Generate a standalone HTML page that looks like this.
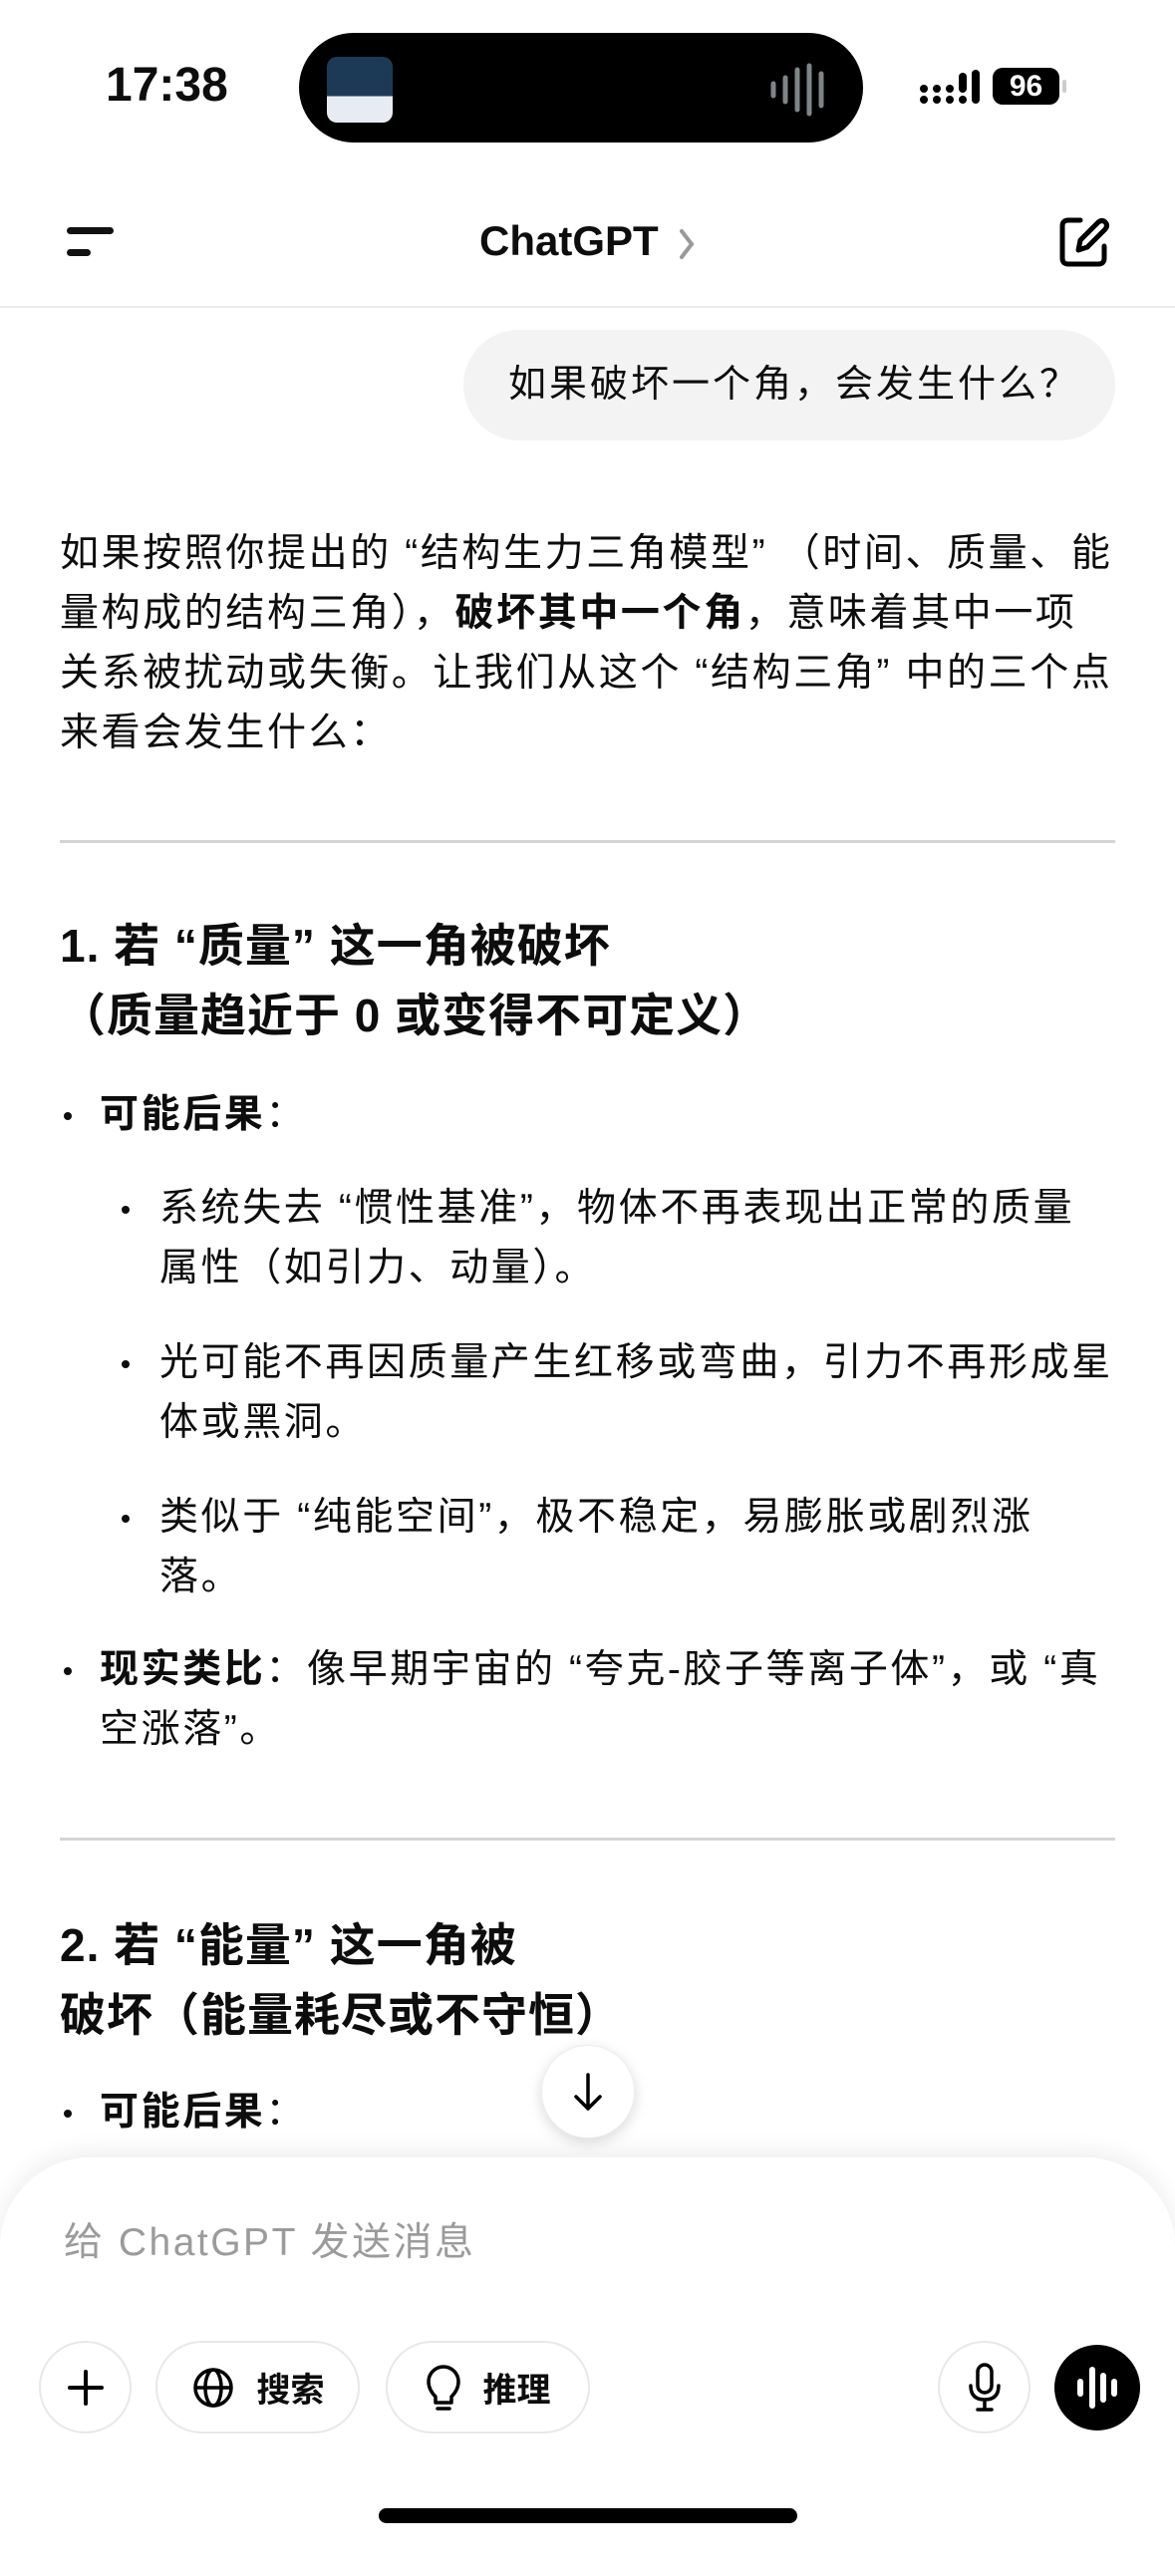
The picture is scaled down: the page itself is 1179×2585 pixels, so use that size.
<!DOCTYPE html>
<html><head><meta charset="utf-8"><style>
*{margin:0;padding:0;box-sizing:border-box}
body{width:1179px;height:2556px;background:#fff;position:relative;overflow:hidden;font-family:"Liberation Sans","Noto Sans CJK SC",sans-serif;color:#0d0d0d}
.a{position:absolute;white-space:nowrap}
.p{font-size:39px;line-height:60px;letter-spacing:2.6px}
.h{font-size:46px;font-weight:700;line-height:70px;letter-spacing:1px}
b{font-weight:700}
.dot{position:absolute;width:8px;height:8px;border-radius:50%;background:#0d0d0d}
.hr{position:absolute;left:60px;width:1059px;height:3px;background:#d4d4d4}
.btn{position:absolute;top:2349px;height:93px;border:2px solid #e8e8e8;border-radius:47px;background:#fff;display:flex;align-items:center;justify-content:center;font-size:34px;font-weight:700}
</style></head><body>
<!-- status bar -->
<div class="a" style="left:106px;top:58px;font-size:48px;font-weight:600;line-height:56px">17:38</div>
<div class="a" style="left:300px;top:33px;width:566px;height:110px;background:#000;border-radius:55px"></div>
<div class="a" style="left:328px;top:57px;width:66px;height:66px;border-radius:10px;background:linear-gradient(#1c3a55 0 60%,#e8ecf2 60%)"></div>
<svg class="a" style="left:770px;top:62px" width="70" height="56"><g stroke="#7d8587" stroke-width="5" stroke-linecap="round"><line x1="6" y1="22" x2="6" y2="34"/><line x1="18" y1="16" x2="18" y2="40"/><line x1="30" y1="8" x2="30" y2="48"/><line x1="42" y1="4" x2="42" y2="52"/><line x1="54" y1="12" x2="54" y2="44"/></g></svg>
<svg class="a" style="left:923px;top:70px" width="62" height="36"><g fill="#000"><circle cx="4" cy="30" r="4"/><circle cx="17" cy="30" r="4"/><circle cx="30" cy="30" r="4"/><circle cx="43" cy="30" r="4"/><circle cx="4" cy="19" r="4"/><circle cx="17" cy="19" r="4"/><circle cx="30" cy="19" r="4"/><rect x="39" y="3" width="8" height="20" rx="4"/><rect x="52" y="0" width="8" height="34" rx="4"/></g></svg>
<div class="a" style="left:996px;top:68px;width:67px;height:37px;background:#000;border-radius:10px;color:#fff;font-size:30px;font-weight:700;text-align:center;line-height:37px">96</div>
<div class="a" style="left:1066px;top:80px;width:4px;height:13px;background:#ccc;border-radius:2px"></div>
<!-- header -->
<div class="a" style="left:67px;top:228px;width:47px;height:7px;background:#111;border-radius:4px"></div>
<div class="a" style="left:67px;top:250px;width:24px;height:7px;background:#111;border-radius:4px"></div>
<div class="a" style="left:481px;top:217px;font-size:42px;font-weight:600;line-height:50px">ChatGPT</div>
<svg class="a" style="left:679px;top:228px" width="22" height="34"><path d="M5 4 L15 17 L5 30" stroke="#999" stroke-width="4" fill="none" stroke-linecap="round"/></svg>
<svg class="a" style="left:1062px;top:215px" width="52" height="56" viewBox="0 0 52 56"><path d="M22 6 H10 Q4 6 4 12 V44 Q4 50 10 50 H40 Q46 50 46 44 V32" stroke="#000" stroke-width="5" fill="none" stroke-linecap="round"/><path d="M20 36 L22 26 L40 8 Q44 5 47 8 Q50 11 47 15 L29 33 Z" stroke="#000" stroke-width="5" fill="none" stroke-linejoin="round"/></svg>
<div class="a" style="left:0;top:307px;width:1179px;height:2px;background:#ececec"></div>
<!-- user bubble -->
<div class="a" style="left:465px;top:331px;width:654px;height:111px;background:#f3f3f3;border-radius:56px;font-size:38px;letter-spacing:3px;line-height:111px;padding-left:45px">如果破坏一个角，会发生什么？</div>
<!-- paragraph -->
<div class="a p" style="left:60px;top:526px">如果按照你提出的 “结构生力三角模型” （时间、质量、能<br>量构成的结构三角），<b>破坏其中一个角</b>，意味着其中一项<br>关系被扰动或失衡。让我们从这个 “结构三角” 中的三个点<br>来看会发生什么：</div>
<div class="hr" style="top:843px"></div>
<div class="a h" style="left:60px;top:914px">1. 若 “质量” 这一角被破坏<br>（质量趋近于 0 或变得不可定义）</div>
<div class="dot" style="left:64px;top:1116px"></div>
<div class="a p" style="left:100px;top:1089px"><b>可能后果</b>：</div>
<div class="dot" style="left:122px;top:1210px"></div>
<div class="a p" style="left:160px;top:1183px">系统失去 “惯性基准”，物体不再表现出正常的质量<br>属性（如引力、动量）。</div>
<div class="dot" style="left:122px;top:1365px"></div>
<div class="a p" style="left:160px;top:1338px">光可能不再因质量产生红移或弯曲，引力不再形成星<br>体或黑洞。</div>
<div class="dot" style="left:122px;top:1520px"></div>
<div class="a p" style="left:160px;top:1493px">类似于 “纯能空间”，极不稳定，易膨胀或剧烈涨<br>落。</div>
<div class="dot" style="left:64px;top:1673px"></div>
<div class="a p" style="left:100px;top:1646px"><b>现实类比</b>：像早期宇宙的 “夸克-胶子等离子体”，或 “真<br>空涨落”。</div>
<div class="hr" style="top:1844px"></div>
<div class="a h" style="left:60px;top:1917px">2. 若 “能量” 这一角被<br>破坏（能量耗尽或不守恒）</div>
<div class="dot" style="left:64px;top:2117px"></div>
<div class="a p" style="left:100px;top:2090px"><b>可能后果</b>：</div>
<!-- down button -->
<div class="a" style="left:543px;top:2052px;width:94px;height:94px;border-radius:50%;background:#fff;box-shadow:0 4px 14px rgba(0,0,0,.15);border:1px solid #eee"></div>
<svg class="a" style="left:572px;top:2078px" width="36" height="44"><path d="M18 4 V38 M6 26 L18 38 L30 26" stroke="#000" stroke-width="3.5" fill="none" stroke-linecap="round" stroke-linejoin="round"/></svg>
<!-- bottom panel -->
<div class="a" style="left:0;top:2165px;width:1179px;height:420px;background:#fff;border-radius:90px 90px 0 0;box-shadow:0 -6px 24px rgba(0,0,0,.07)"></div>
<div class="a" style="left:64px;top:2226px;font-size:39px;letter-spacing:2.5px;color:#9b9b9b;line-height:50px">给 ChatGPT 发送消息</div>
<div class="btn" style="left:39px;width:93px"><svg width="40" height="40"><path d="M20 4V36M4 20H36" stroke="#000" stroke-width="4" stroke-linecap="round"/></svg></div>
<div class="btn" style="left:156px;width:205px"><svg width="44" height="44" viewBox="0 0 44 44" style="margin-right:22px"><circle cx="22" cy="22" r="18" stroke="#000" stroke-width="3.5" fill="none"/><ellipse cx="22" cy="22" rx="8" ry="18" stroke="#000" stroke-width="3.5" fill="none"/><path d="M4 22H40" stroke="#000" stroke-width="3.5"/></svg>搜索</div>
<div class="btn" style="left:387px;width:205px"><svg width="36" height="50" viewBox="0 0 36 50" style="margin-right:22px"><path d="M10 34 Q3 27 3 19 A15 15 0 0 1 33 19 Q33 27 26 34 V40 H10 Z" stroke="#000" stroke-width="3.5" fill="none" stroke-linejoin="round"/><path d="M12 46 H24" stroke="#000" stroke-width="3.5" stroke-linecap="round"/></svg>推理</div>
<div class="btn" style="left:941px;width:93px"><svg width="36" height="52" viewBox="0 0 36 52"><rect x="11" y="3" width="14" height="28" rx="7" stroke="#000" stroke-width="3.5" fill="none"/><path d="M4 24 Q4 38 18 38 Q32 38 32 24 M18 38 V48 M11 48 H25" stroke="#000" stroke-width="3.5" fill="none" stroke-linecap="round"/></svg></div>
<div class="a" style="left:1058px;top:2353px;width:86px;height:86px;border-radius:50%;background:#000"></div>
<svg class="a" style="left:1074px;top:2370px" width="54" height="52"><g stroke="#fff" stroke-width="6" stroke-linecap="round"><line x1="10" y1="20" x2="10" y2="32"/><line x1="22" y1="8" x2="22" y2="44"/><line x1="33" y1="14" x2="33" y2="38"/><line x1="44" y1="20" x2="44" y2="32"/></g></svg>
<div class="a" style="left:380px;top:2517px;width:420px;height:15px;background:#000;border-radius:8px"></div>
</body></html>
